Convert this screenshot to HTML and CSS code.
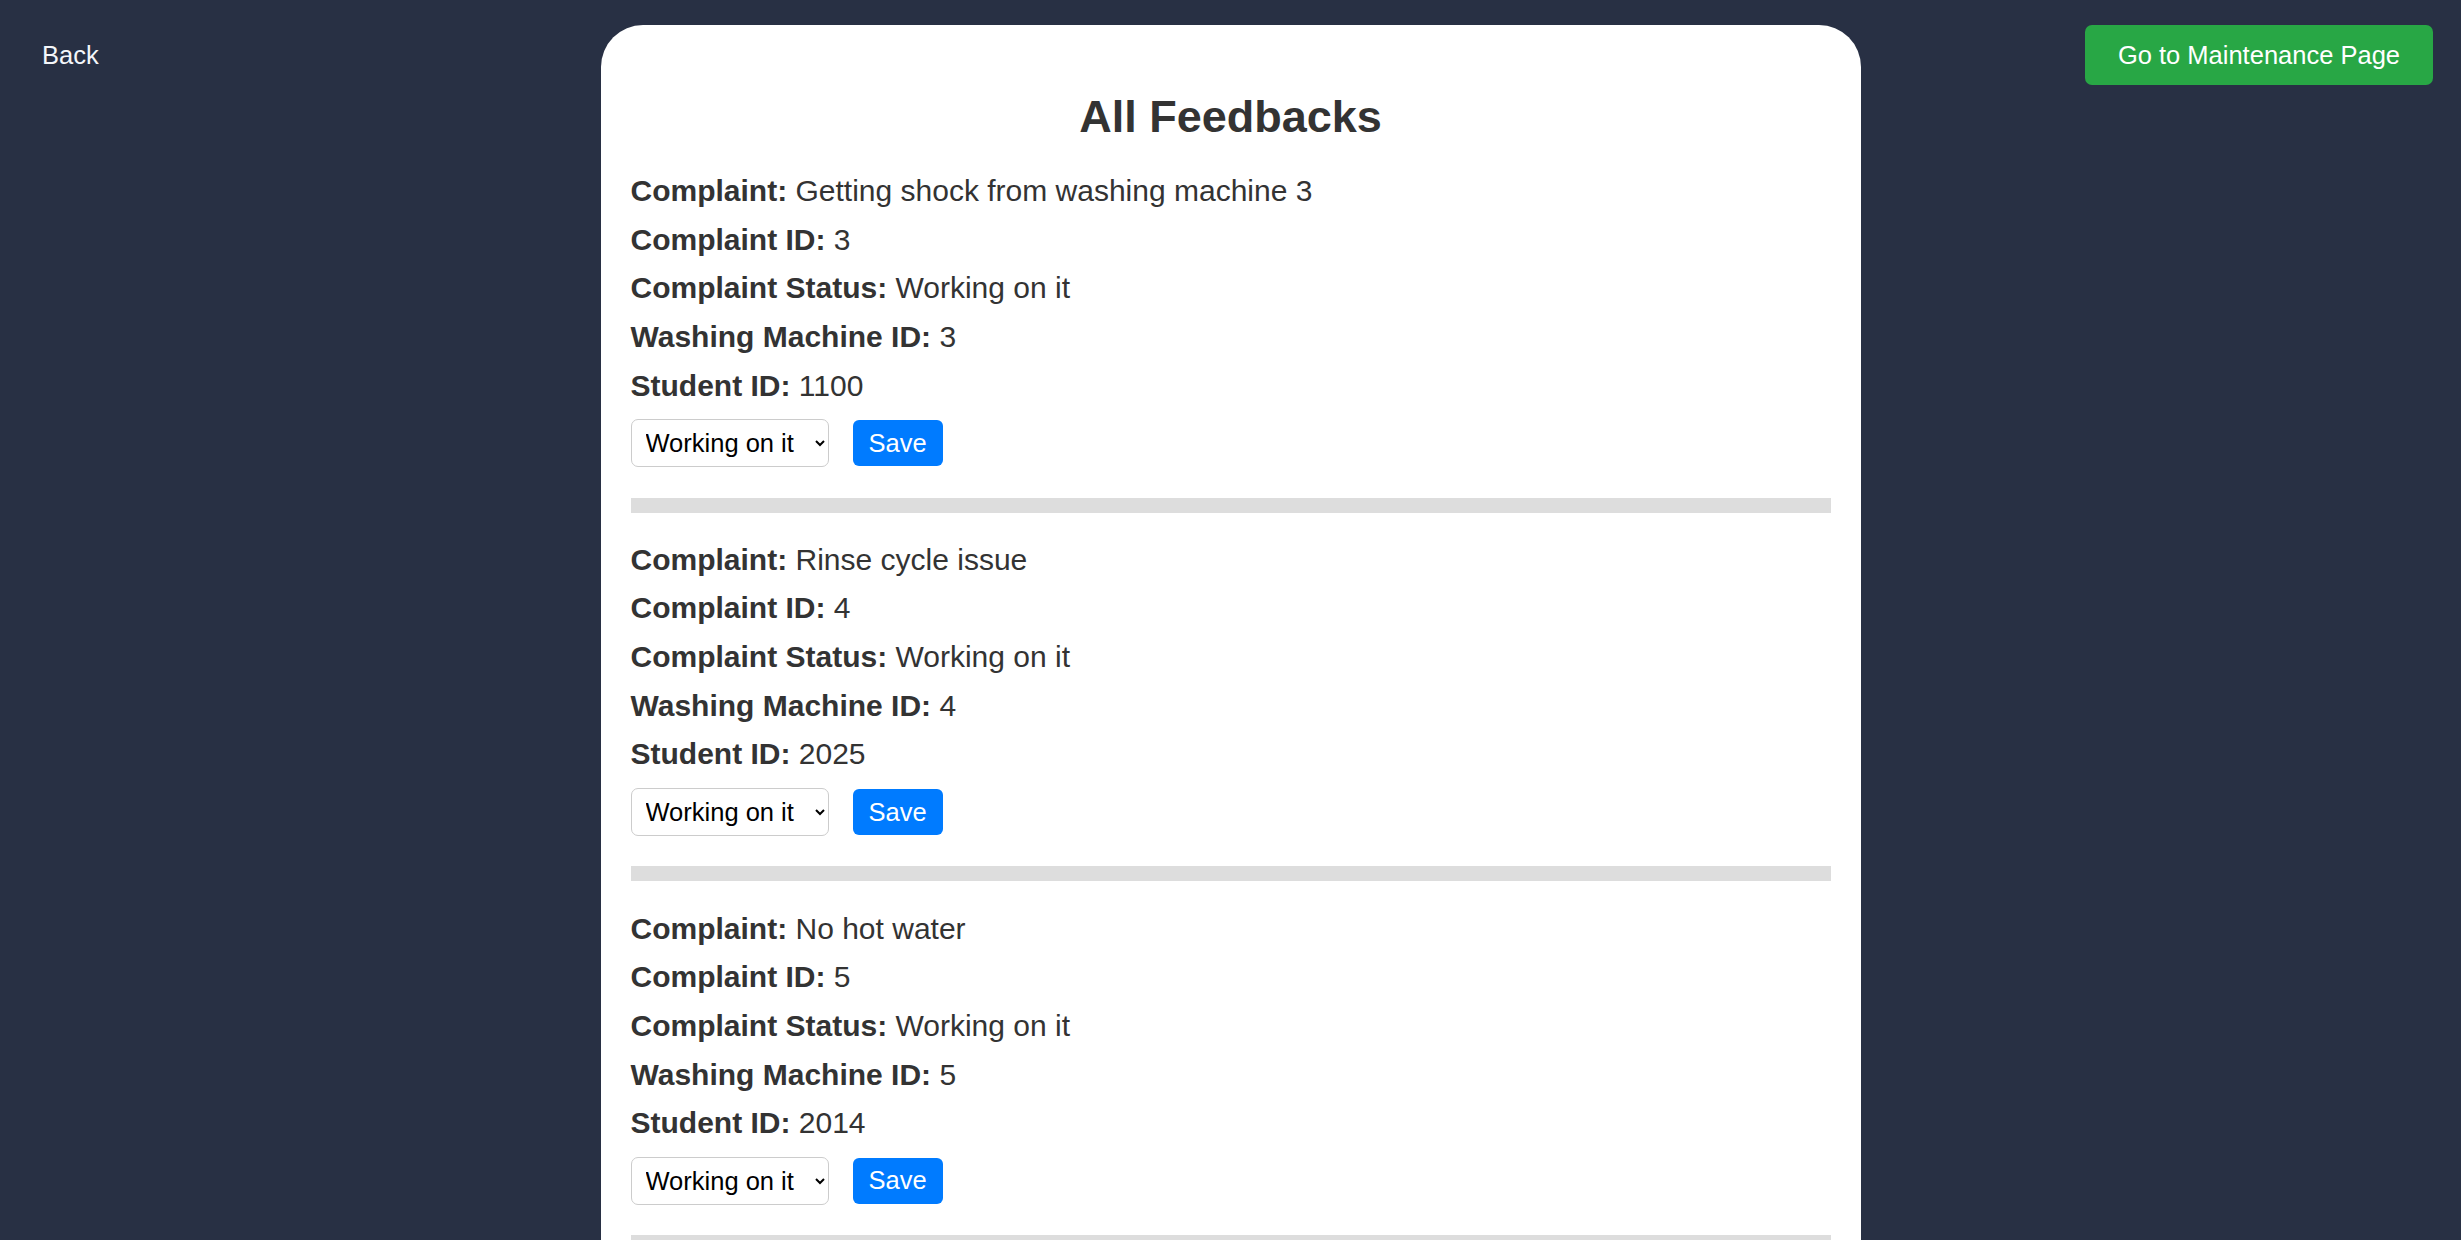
FILE: index.html
```html
<!DOCTYPE html>
<html lang="en">
<head>
<meta charset="utf-8">
<title>All Feedbacks</title>
<link rel="stylesheet" href="styles.css">
</head>
<body>
<div class="page">
  <div class="side side-left">
    <a class="back-link" href="#">Back</a>
  </div>
  <main class="card">
    <h2 class="title">All Feedbacks</h2>

    <section class="feedback">
      <p class="field"><strong>Complaint:</strong> Getting shock from washing machine 3</p>
      <p class="field"><strong>Complaint ID:</strong> 3</p>
      <p class="field"><strong>Complaint Status:</strong> Working on it</p>
      <p class="field"><strong>Washing Machine ID:</strong> 3</p>
      <p class="field"><strong>Student ID:</strong> 1100</p>
      <div class="controls">
        <select class="status-select">
          <option>Working on it</option>
          <option>Resolved</option>
          <option>Pending</option>
        </select>
        <button class="save-btn" type="button">Save</button>
      </div>
      <div class="divider"></div>
    </section>

    <section class="feedback">
      <p class="field"><strong>Complaint:</strong> Rinse cycle issue</p>
      <p class="field"><strong>Complaint ID:</strong> 4</p>
      <p class="field"><strong>Complaint Status:</strong> Working on it</p>
      <p class="field"><strong>Washing Machine ID:</strong> 4</p>
      <p class="field"><strong>Student ID:</strong> 2025</p>
      <div class="controls">
        <select class="status-select">
          <option>Working on it</option>
          <option>Resolved</option>
          <option>Pending</option>
        </select>
        <button class="save-btn" type="button">Save</button>
      </div>
      <div class="divider"></div>
    </section>

    <section class="feedback">
      <p class="field"><strong>Complaint:</strong> No hot water</p>
      <p class="field"><strong>Complaint ID:</strong> 5</p>
      <p class="field"><strong>Complaint Status:</strong> Working on it</p>
      <p class="field"><strong>Washing Machine ID:</strong> 5</p>
      <p class="field"><strong>Student ID:</strong> 2014</p>
      <div class="controls">
        <select class="status-select">
          <option>Working on it</option>
          <option>Resolved</option>
          <option>Pending</option>
        </select>
        <button class="save-btn" type="button">Save</button>
      </div>
      <div class="divider"></div>
    </section>
  </main>
  <div class="side side-right">
    <button class="maint-btn" type="button">Go to Maintenance Page</button>
  </div>
</div>
</body>
</html>
```

FILE: styles.css
```css
html, body {
  margin: 0;
  padding: 0;
  background: #283044;
  font-family: "Liberation Sans", Arial, sans-serif;
}

.page {
  display: grid;
  grid-template-columns: 1fr 1260px 1fr;
  align-items: start;
  padding-top: 25px;
}

.side {
  display: flex;
}

.side-left {
  justify-content: flex-start;
  padding-left: 42px;
  padding-top: 16px;
}

.side-right {
  justify-content: flex-end;
  padding-right: 28px;
}

.back-link {
  color: #f4f6fa;
  text-decoration: none;
  font-size: 25.5px;
  line-height: 29px;
}

.maint-btn {
  font-family: "Liberation Sans", Arial, sans-serif;
  font-size: 25.5px;
  line-height: 29px;
  color: #ffffff;
  background: #28a745;
  border: none;
  border-radius: 7px;
  padding: 15.5px 33px;
  cursor: pointer;
}

.card {
  background: #ffffff;
  border-radius: 42px;
  padding: 30px 30px 60px;
  color: #333333;
}

.title {
  margin: 36px 0 24px;
  font-size: 45px;
  line-height: 52px;
  font-weight: bold;
  text-align: center;
  color: #333333;
}

.field {
  margin: 0;
  font-size: 30px;
  line-height: 48.65px;
}

.field strong {
  font-weight: bold;
}

.controls {
  display: flex;
  align-items: center;
  gap: 24px;
  margin-top: 9px;
  height: 48px;
}

.status-select {
  width: 198px;
  height: 48px;
  font-family: "Liberation Sans", Arial, sans-serif;
  font-size: 25.5px;
  color: #000000;
  background: #ffffff;
  border: 1.5px solid #cccccc;
  border-radius: 7px;
  padding: 0 6px 0 10px;
}

.save-btn {
  font-family: "Liberation Sans", Arial, sans-serif;
  font-size: 25.5px;
  color: #ffffff;
  background: #007bff;
  border: none;
  border-radius: 6px;
  height: 46px;
  padding: 0 16px;
  cursor: pointer;
}

.divider {
  height: 15px;
  background: #dddddd;
  margin: 30.4px 0 23.1px;
}
```
